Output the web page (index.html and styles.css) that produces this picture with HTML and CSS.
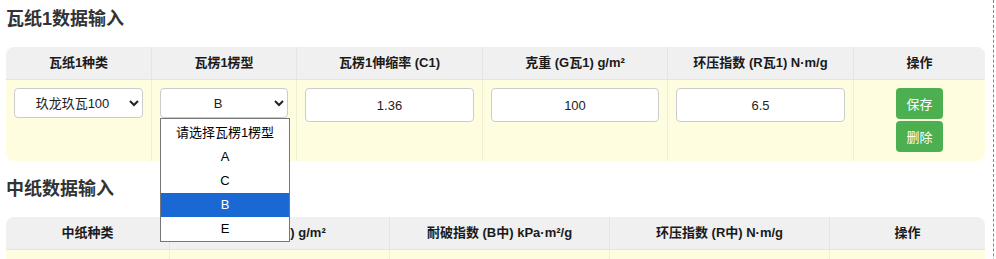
FILE: index.html
```html
<!DOCTYPE html>
<html>
<head>
<meta charset="utf-8">
<title>纸板数据输入</title>
<link rel="stylesheet" href="styles.css">
</head>
<body>

<div class="page">
  <div class="section">
    <h2>瓦纸1数据输入</h2>
    <table class="data-table">
      <colgroup>
        <col style="width:146px"><col style="width:145px"><col style="width:186px">
        <col style="width:185px"><col style="width:186px"><col style="width:131px">
      </colgroup>
      <tr>
        <th>瓦纸1种类</th>
        <th>瓦楞1楞型</th>
        <th>瓦楞1伸缩率 (C1)</th>
        <th>克重 (G瓦1) g/m²</th>
        <th>环压指数 (R瓦1) N·m/g</th>
        <th>操作</th>
      </tr>
      <tr>
        <td>
          <select class="field select">
            <option>玖龙玖瓦100</option>
          </select>
        </td>
        <td class="has-menu">
          <select class="field select">
            <option>B</option>
          </select>
          <!-- 展开的下拉列表 -->
          <div class="menu">
            <div class="menu-item">请选择瓦楞1楞型</div>
            <div class="menu-item">A</div>
            <div class="menu-item">C</div>
            <div class="menu-item active">B</div>
            <div class="menu-item">E</div>
          </div>
        </td>
        <td><input class="field" type="text" value="1.36"></td>
        <td><input class="field" type="text" value="100"></td>
        <td><input class="field" type="text" value="6.5"></td>
        <td class="actions">
          <button class="button">保存</button>
          <button class="button">删除</button>
        </td>
      </tr>
    </table>
  </div>

  <div class="section">
    <h2>中纸数据输入</h2>
    <table class="data-table">
      <colgroup>
        <col style="width:164px"><col style="width:220px"><col style="width:220px">
        <col style="width:220px"><col style="width:155px">
      </colgroup>
      <tr>
        <th>中纸种类</th>
        <th>克重 (G中) g/m²</th>
        <th>耐破指数 (B中) kPa·m²/g</th>
        <th>环压指数 (R中) N·m/g</th>
        <th>操作</th>
      </tr>
      <tr>
        <td></td><td></td><td></td><td></td><td></td>
      </tr>
    </table>
  </div>
</div>

</body>
</html>
```

FILE: styles.css
```css
html, body {
  margin: 0;
  height: 100%;
  overflow: hidden;
}

body {
  font-family: "Liberation Sans", Arial, "Noto Sans CJK SC", sans-serif;
  color: #333;
  background-color: #fff;
}

.page {
  width: 979px;
  min-height: 100%;
  padding: 0 8px 0 6px;
  border-right: 1px dashed #ff3fa4;
}

.section {
  padding-top: 8px;
}

.section + .section {
  padding-top: 17px;
}

.section h2 {
  margin: 0 0 17px;
  font-size: 18px;
  line-height: 22px;
  font-weight: bold;
  color: #333;
}

.data-table {
  width: 979px;
  table-layout: fixed;
  border-collapse: separate;
  border-spacing: 0;
  border-radius: 8px;
  font-size: 13px;
}

.data-table th {
  background-color: #f0f0f0;
  color: #1a1a1a;
  font-weight: bold;
  padding: 8px;
  line-height: 16px;
  border-right: 1px solid #e4e4e4;
  border-bottom: 1px solid #e4e4e4;
  text-align: center;
}

.data-table td {
  background-color: #fefde0;
  padding: 8px;
  height: 65px;
  vertical-align: top;
  text-align: center;
  border-right: 1px solid #f0efd2;
}

.data-table th:last-child,
.data-table td:last-child {
  border-right: none;
}

.data-table tr:first-child th:first-child { border-top-left-radius: 8px; }
.data-table tr:first-child th:last-child { border-top-right-radius: 8px; }
.data-table tr:last-child td:first-child { border-bottom-left-radius: 8px; }
.data-table tr:last-child td:last-child { border-bottom-right-radius: 8px; }

.field {
  display: block;
  width: 100%;
  height: 34px;
  box-sizing: border-box;
  padding: 0 8px;
  border: 1px solid #ccc;
  border-radius: 4px;
  background-color: #fff;
  font-family: inherit;
  font-size: 13px;
  color: #222;
  text-align: center;
}

.select {
  height: 30px;
  padding: 0 4px;
  text-align-last: center;
}

.has-menu {
  position: relative;
}

.menu {
  position: absolute;
  top: 38px;
  left: 8px;
  width: 128px;
  padding-top: 2px;
  border: 1px solid #767676;
  background-color: #fff;
  z-index: 5;
}

.menu-item {
  height: 24px;
  line-height: 24px;
  font-size: 13px;
  color: #000;
  text-align: center;
}

.menu-item.active {
  background-color: #1a68d3;
  color: #fff;
}

.actions {
  font-size: 0;
}

.button {
  display: block;
  margin: 0 auto;
  width: 47px;
  height: 31px;
  padding: 0;
  background-color: #4caf50;
  color: white;
  border: none;
  border-radius: 4px;
  font-family: inherit;
  font-size: 13px;
  cursor: pointer;
}

.button + .button {
  margin-top: 2px;
}
```
